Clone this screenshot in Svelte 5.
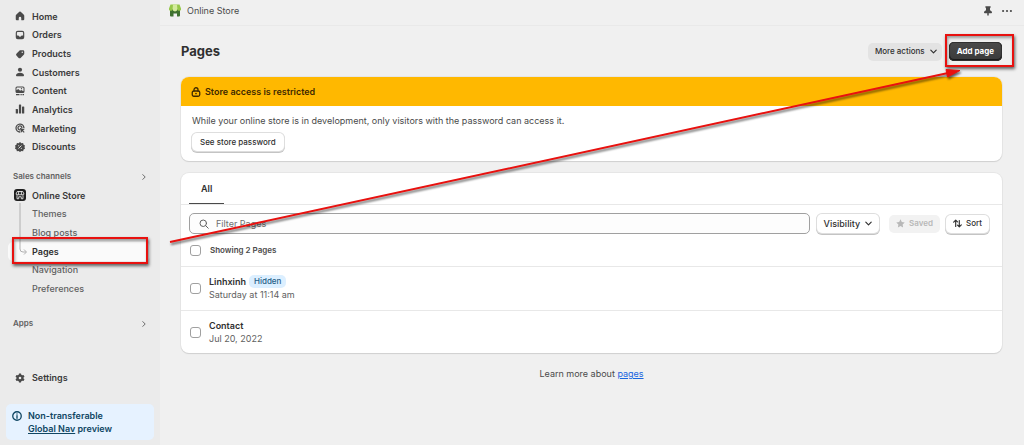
<script lang="ts">
	type NavItem = {
		label: string;
		icon: string;
	};

	type PageRow = {
		id: string;
		title: string;
		date: string;
		hidden: boolean;
	};

	const mainNav: NavItem[] = [
		{ label: 'Home', icon: 'home' },
		{ label: 'Orders', icon: 'orders' },
		{ label: 'Products', icon: 'products' },
		{ label: 'Customers', icon: 'customers' },
		{ label: 'Content', icon: 'content' },
		{ label: 'Analytics', icon: 'analytics' },
		{ label: 'Marketing', icon: 'marketing' },
		{ label: 'Discounts', icon: 'discounts' }
	];

	const storeNav = ['Themes', 'Blog posts', 'Pages', 'Navigation', 'Preferences'];
	const current = 'Pages';

	const pages: PageRow[] = [
		{ id: 'linhxinh', title: 'Linhxinh', date: 'Saturday at 11:14 am', hidden: true },
		{ id: 'contact', title: 'Contact', date: 'Jul 20, 2022', hidden: false }
	];

	let filter = $state('');
	let selected = $state<string[]>([]);

	const allSelected = $derived(selected.length === pages.length);

	function toggleAll() {
		selected = allSelected ? [] : pages.map((page) => page.id);
	}
</script>

{#snippet icon(name: string)}
	<svg class="icon" viewBox="0 0 20 20" aria-hidden="true">
		{#if name === 'home'}
			<path d="M8.600 1.700a2 2 0 0 1 2.800 0l6.300 6c.5.5.8 1.100.8 1.800V16.500a2 2 0 0 1-2 2h-3a1 1 0 0 1-1-1v-3.500a2.500 2.500 0 0 0-5 0V17.500a1 1 0 0 1-1 1H3.500a2 2 0 0 1-2-2V9.500c0-.7.3-1.300.8-1.800z" />
		{:else if name === 'orders'}
			<path fill-rule="evenodd" d="M5.500 1.500h9a4 4 0 0 1 4 4v9a4 4 0 0 1-4 4h-9a4 4 0 0 1-4-4v-9a4 4 0 0 1 4-4zM5.500 3.800a1.700 1.700 0 0 0-1.700 1.700v5.500h2.400c.9 0 1.300.5 1.700 1.200.4.7.8 1.100 1.600 1.100h1c.8 0 1.200-.4 1.600-1.100.4-.7.8-1.200 1.700-1.200h2.400V5.500a1.700 1.700 0 0 0-1.700-1.700z" />
		{:else if name === 'products'}
			<path fill-rule="evenodd" d="M11 2.500h5A2.500 2.500 0 0 1 18.500 5v4.500c0 .8-.4 1.600-1 2.200l-5.800 5.600a3.500 3.500 0 0 1-4.900 0l-3.600-3.600a3.500 3.500 0 0 1 0-4.900L8.700 3.400c.6-.6 1.400-.9 2.300-.9zM14.500 8a1.400 1.400 0 1 0 0-2.800 1.400 1.400 0 0 0 0 2.800z" />
		{:else if name === 'customers'}
			<circle cx="10" cy="5.500" r="4.200" />
			<path d="M2 17c0-3.500 3.600-5.500 8-5.500s8 2 8 5.500c0 1-.5 1.500-1.500 1.500h-13c-1 0-1.500-.5-1.500-1.500z" />
		{:else if name === 'content'}
			<path fill-rule="evenodd" d="M4 1h12a3 3 0 0 1 3 3v7a3 3 0 0 1-3 3H4a3 3 0 0 1-3-3V4a3 3 0 0 1 3-3zM3 8.500l3.500-2.300 3.700 3.300 2.300-1.600 4.500 2.500V4.500A1.500 1.500 0 0 0 15.500 3h-11A1.500 1.500 0 0 0 3 4.500zM13 4a1.300 1.300 0 1 1 0 2.600A1.300 1.300 0 0 1 13 4z" />
			<path d="M2 16h7v2.500H2zM11 16h2.500v2.500H11zM15 16h3v2.500h-3z" />
		{:else if name === 'analytics'}
			<rect x="1.500" y="10" width="4.500" height="9" rx="1.200" />
			<rect x="7.800" y="1" width="4.500" height="18" rx="1.200" />
			<rect x="14" y="5" width="4.500" height="14" rx="1.200" />
		{:else if name === 'marketing'}
			<path d="M17.800 9.500A7.900 7.900 0 1 0 9.800 18" class="line" />
			<path d="M13.800 9A4 4 0 1 0 9 13.800" class="line" />
			<path d="M9.300 9.300l10.200 3.600-3.500 1.900 3.300 3.300-1.600 1.600-3.300-3.300-1.700 3.300z" />
		{:else if name === 'discounts'}
			<path d="M10 .2l2.800 2.100 3.400-.3 1 3.300 2.800 1.800-1 3.100 1 3.200-2.800 1.800-1 3.200-3.400-.2L10 20l-2.800-1.800-3.400.2-1-3.200L0 13.400l1-3.200-1-3.100 2.800-1.800 1-3.300 3.400.3z" />
			<path d="M7 13l6-6" class="cut" />
			<circle cx="7.300" cy="7.500" r="1.200" class="hole" />
			<circle cx="12.700" cy="12.500" r="1.200" class="hole" />
		{:else if name === 'settings'}
			<path fill-rule="evenodd" d="M8 1h4l.6 2.700 1.800 1 2.600-.8 2 3.500L17 9.200v1.600l2 1.800-2 3.500-2.600-.8-1.800 1L12 19H8l-.6-2.700-1.800-1-2.600.8-2-3.500 2-1.800V9.200L1 7.400l2-3.500 2.600.8 1.800-1zM10 12.600a2.600 2.600 0 1 0 0-5.200 2.600 2.600 0 0 0 0 5.200z" />
		{:else if name === 'chevron-right'}
			<path d="M7 4l6 6-6 6" class="thin" />
		{:else if name === 'chevron-down'}
			<path d="M4 7l6 6 6-6" class="line" />
		{:else if name === 'lock'}
			<path d="M6 8V5.500a4 4 0 0 1 8 0V8" class="line" />
			<rect x="2.500" y="8" width="15" height="10.500" rx="3" class="line" />
			<circle cx="10" cy="13" r="1.700" />
		{:else if name === 'search'}
			<circle cx="8.500" cy="8.500" r="6.500" class="thin" />
			<path d="M13.300 13.300l5.200 5.200" class="thin" />
		{:else if name === 'star'}
			<path d="M10 .8l2.900 5.900 6.500.9-4.700 4.600 1.100 6.500L10 15.600l-5.800 3.100 1.100-6.500L.6 7.600l6.500-.9z" />
		{:else if name === 'sort'}
			<path d="M6 16.500V3M1.500 7L6 2.500 10 6.500M14 3.500V17M10 13.500l4 4 4.500-4.500" class="line" />
		{:else if name === 'pin'}
			<path d="M5.500.5h9a1 1 0 0 1 1 1c0 1.300-.8 2.300-1.500 3v4c2.300 1 4 2.500 4 4.500a1.500 1.500 0 0 1-1.500 1.500h-5V18L10 20l-1.500-2v-3.500h-5A1.500 1.500 0 0 1 2 13c0-2 1.700-3.500 4-4.500v-4c-.7-.7-1.500-1.700-1.500-3a1 1 0 0 1 1-1z" />
		{:else if name === 'dots'}
			<circle cx="2.200" cy="10" r="2.200" />
			<circle cx="10" cy="10" r="2.200" />
			<circle cx="17.800" cy="10" r="2.200" />
		{:else if name === 'info'}
			<circle cx="10" cy="10" r="8.500" class="line" />
			<path d="M10 9.500v5" class="line" />
			<circle cx="10" cy="6" r="1.400" />
		{/if}
	</svg>
{/snippet}

<div class="admin">
	<aside class="sidebar">
		<nav aria-label="Main">
			<ul class="main-nav">
				{#each mainNav as item}
					<li>
						<a href="#{item.icon}">{@render icon(item.icon)}{item.label}</a>
					</li>
				{/each}
			</ul>

			<button class="section-title">Sales channels {@render icon('chevron-right')}</button>
			<ul class="store-nav">
				<li>
					<a class="store" href="#store">
						<svg class="store-icon" viewBox="0 0 24 24" aria-hidden="true">
							<rect width="24" height="24" rx="6" fill="#1f1f1f" />
							<path d="M6.500 5h11L20 10a2 2 0 0 1-2 1.500H6A2 2 0 0 1 4 10zM6 12.500v7h3.500V15.500h5v4h3.500v-7M9.500 5L9 11M14.500 5l.5 6" fill="none" stroke="#fff" stroke-width="1.600" />
						</svg>
						Online Store
					</a>
				</li>
				{#each storeNav as item}
					<li class:current={item === current}>
						<a class="sub" href="#{item}" aria-current={item === current ? 'page' : undefined}>{item}</a>
						{#if item === current}
							<svg class="branch" viewBox="0 0 8 52" aria-hidden="true">
								<path d="M1 0v46q0 3 3 3h3M5 46.500L7.500 49 5 51.500" />
							</svg>
							<span class="mark mark-nav"></span>
						{/if}
					</li>
				{/each}
			</ul>

			<button class="section-title apps">Apps {@render icon('chevron-right')}</button>
			<a class="settings" href="#settings">{@render icon('settings')}Settings</a>
		</nav>

		<div class="notice">
			{@render icon('info')}
			<p>Non-transferable<br /><a href="#nav">Global Nav</a> preview</p>
		</div>
	</aside>

	<main>
		<header class="topbar">
			<svg class="logo" viewBox="0 0 12 13" aria-hidden="true">
				<path d="M1 5h10v6.500a1 1 0 0 1-1 1H8V9.500H4.500v3H2a1 1 0 0 1-1-1z" fill="#3f7130" />
				<path d="M1.500.5h9L12 4.500a1.900 1.900 0 0 1-3.800.8H3.800A1.900 1.900 0 0 1 0 4.500z" fill="#95c749" />
				<path d="M4 .5h4l.4 4.500a2.400 2.400 0 0 1-4.800 0z" fill="#d3eb9c" />
			</svg>
			<span>Online Store</span>
			<button class="pin" aria-label="Pin">{@render icon('pin')}</button>
			<button aria-label="More">{@render icon('dots')}</button>
		</header>

		<div class="content">
			<div class="heading">
				<h1>Pages</h1>
				<button class="more">More actions {@render icon('chevron-down')}</button>
				<div class="marked">
					<button class="primary">Add page</button>
					<span class="mark mark-add"></span>
				</div>
			</div>

			<section class="card">
				<h2 class="warning">{@render icon('lock')}Store access is restricted</h2>
				<div class="access">
					<p>While your online store is in development, only visitors with the password can access it.</p>
					<button class="outline">See store password</button>
				</div>
			</section>

			<section class="card">
				<div class="tabs">
					<button class="tab">All</button>
				</div>
				<div class="filters">
					<label class="search">
						{@render icon('search')}
						<input type="text" placeholder="Filter Pages" aria-label="Filter Pages" bind:value={filter} />
					</label>
					<button class="outline visibility">Visibility {@render icon('chevron-down')}</button>
					<button class="saved" disabled>{@render icon('star')}Saved</button>
					<button class="outline sort">{@render icon('sort')}Sort</button>
				</div>
				<label class="select-all">
					<input type="checkbox" checked={allSelected} onchange={toggleAll} />
					Showing 2 Pages
				</label>
				<ul class="rows">
					{#each pages as page}
						<li>
							<input type="checkbox" id={page.id} value={page.id} bind:group={selected} />
							<label for={page.id}>
								<span class="title">
									{page.title}
									{#if page.hidden}<span class="badge">Hidden</span>{/if}
								</span>
								<span class="date">{page.date}</span>
							</label>
						</li>
					{/each}
				</ul>
			</section>

			<p class="learn">Learn more about <a href="#pages">pages</a></p>
		</div>
	</main>

	<svg class="arrow" viewBox="0 0 1024 445" preserveAspectRatio="none" aria-hidden="true">
		<path d="M170 242L948 73" stroke="#e8110f" stroke-width="2" />
		<path d="M960 70.500L947.500 77 946 69.500z" fill="#e8110f" stroke="#e8110f" />
	</svg>
</div>

<style>
	:global(body) {
		background: #f0f0f0;
	}

	.admin {
		position: relative;
		display: flex;
		min-height: 100vh;
		background: #f0f0f0;
		color: #303030;
		font-family: Inter, 'Liberation Sans', sans-serif;
		font-size: 9px;
		line-height: 13px;
	}

	ul,
	p,
	h1,
	h2 {
		margin: 0;
		padding: 0;
		list-style: none;
	}

	button,
	input {
		margin: 0;
		padding: 0;
		border: 0;
		background: none;
		color: inherit;
		font: inherit;
	}

	.icon {
		flex: none;
		width: 10px;
		height: 10px;
		fill: currentColor;
	}

	.icon .line,
	.icon .thin {
		fill: none;
		stroke: currentColor;
		stroke-width: 2.6;
		stroke-linecap: round;
		stroke-linejoin: round;
	}

	.icon .thin {
		stroke-width: 2;
	}

	.icon .cut {
		stroke: #ebebeb;
		stroke-width: 1.8;
	}

	.icon .hole {
		fill: #ebebeb;
	}

	/* sidebar */
	.sidebar {
		flex: none;
		display: flex;
		flex-direction: column;
		box-sizing: border-box;
		width: 160px;
		padding: 7px 6px 5px;
		background: #ebebeb;
		color: #3a3a3a;
		font-weight: 600;
	}

	.main-nav,
	.store-nav {
		display: grid;
		grid-auto-rows: 1fr;
	}

	.main-nav {
		height: 149px;
	}

	.store-nav {
		height: 112px;
	}

	.sidebar li {
		position: relative;
		display: flex;
		align-items: center;
		border-radius: 5px;
	}

	.sidebar nav a {
		display: flex;
		align-items: center;
		gap: 7px;
		padding-left: 9px;
		color: inherit;
		text-decoration: none;
	}

	.sidebar nav .icon {
		color: #4a4a4a;
	}

	.sidebar nav .store {
		gap: 6px;
		padding-left: 8px;
	}

	.store-icon {
		width: 12px;
		height: 12px;
	}

	.sidebar nav .sub {
		padding-left: 26px;
		color: #616161;
		font-weight: 500;
	}

	.sidebar li.current {
		margin: 0 4px 0 2px;
		background: #fafafa;
	}

	.sidebar .current .sub {
		padding-left: 24px;
		color: #303030;
		font-weight: 600;
	}

	.branch {
		position: absolute;
		bottom: 6px;
		left: 11px;
		width: 8px;
		height: 52px;
		fill: none;
		stroke: #b0b0b0;
	}

	.section-title {
		display: flex;
		align-items: center;
		justify-content: space-between;
		width: 100%;
		padding: 14px 6px 3px 7px;
		color: #616161;
		font-size: 8px;
	}

	.section-title .icon {
		width: 8px;
		height: 8px;
	}

	.section-title.apps {
		padding-top: 19px;
	}

	.sidebar nav .settings {
		padding-top: 38px;
	}

	.notice {
		display: flex;
		gap: 6px;
		margin-top: auto;
		padding: 5px 6px;
		border-radius: 5px;
		background: #e6f2ff;
		color: #0f4663;
	}

	.notice .icon {
		margin-top: 2px;
	}

	.notice a {
		color: inherit;
	}

	/* main */
	main {
		flex: 1;
		min-width: 0;
	}

	.topbar {
		display: flex;
		align-items: center;
		box-sizing: border-box;
		height: 26px;
		padding: 0 12px 4px 9px;
		border-bottom: 1px solid #e9e9e9;
		color: #4a4a4a;
	}

	.topbar .logo {
		width: 12px;
		height: 13px;
		margin-right: 6px;
	}

	.topbar button {
		display: flex;
	}

	.topbar .pin {
		margin: 0 9px 0 auto;
	}

	.content {
		padding: 16px 22px 16px 21px;
	}

	.heading {
		display: flex;
		align-items: center;
		gap: 7px;
		height: 19px;
		margin-bottom: 16px;
	}

	h1 {
		flex: 1;
		font-size: 13px;
		font-weight: 700;
	}

	.content button {
		display: flex;
		align-items: center;
		border-radius: 5px;
		font-size: 8px;
		font-weight: 500;
	}

	.content button .icon {
		width: 9px;
		height: 9px;
	}

	.content .more {
		gap: 4px;
		height: 18px;
		padding: 0 4px 0 7px;
		background: #e3e3e3;
	}

	.marked {
		position: relative;
	}

	.content .primary {
		height: 19px;
		padding: 0 8px;
		background: linear-gradient(#4a4a4a, #3a3a3a);
		box-shadow: inset 0 0 0 1px #303030, inset 0 -1px 0 1px #1a1a1a;
		color: #fff;
		font-weight: 700;
	}

	.mark {
		position: absolute;
		border: 2px solid #e8110f;
		box-shadow: 1px 2px 3px rgb(0 0 0 / 60%), inset 1px 2px 3px rgb(0 0 0 / 35%);
	}

	.mark-nav {
		inset: -5px 2px -3px 4px;
	}

	.mark-add {
		inset: -8px -12px -6px -4px;
	}

	.card {
		margin-bottom: 12px;
		overflow: hidden;
		border-radius: 8px;
		background: #fff;
		box-shadow: 0 1px 1px #d0d0d0, 0 0 0 1px #e6e6e6;
	}

	.warning {
		display: flex;
		align-items: center;
		gap: 4px;
		padding: 8px 10px;
		background: #ffb800;
		color: #3f2a00;
		font-size: 9px;
		font-weight: 600;
	}

	.access {
		padding: 8px 11px 10px;
		color: #4a4a4a;
	}

	.access button {
		margin-top: 6px;
	}

	.content .outline {
		height: 18px;
		padding: 0 8px;
		background: #fff;
		box-shadow: 0 0 0 1px #dedede, 0 1px 0 1px #c4c4c4;
		color: #303030;
	}

	.tabs {
		display: flex;
		padding: 0 8px;
		border-bottom: 1px solid #e8e8e8;
	}

	.content .tab {
		height: 31px;
		padding: 0 12px;
		border-bottom: 1px solid #4a4a4a;
		border-radius: 0;
		font-size: 9px;
		font-weight: 600;
	}

	.filters {
		display: flex;
		align-items: center;
		padding: 8px 13px 7px 8px;
	}

	.search {
		flex: 1;
		display: flex;
		align-items: center;
		gap: 7px;
		height: 19px;
		padding: 0 9px;
		border: 1px solid #a0a0a0;
		border-radius: 5px;
		background: #fdfdfd;
		color: #616161;
	}

	.search input {
		flex: 1;
		outline: none;
	}

	.search input::placeholder {
		color: #707070;
		opacity: 1;
	}

	.content .visibility {
		gap: 4px;
		height: 19px;
		margin: 0 10px 0 7px;
		padding: 0 6px 0 7px;
		font-size: 9px;
	}

	.content .saved {
		gap: 4px;
		height: 18px;
		margin-right: 6px;
		padding: 0 7px;
		background: #f2f2f2;
		color: #b8b8b8;
		font-weight: 600;
	}

	.content .sort {
		gap: 4px;
		padding: 0 7px;
	}

	input[type='checkbox'] {
		flex: none;
		box-sizing: border-box;
		width: 11px;
		height: 11px;
		border: 1px solid #a0a0a0;
		border-radius: 3px;
		background: #fff;
		appearance: none;
	}

	input[type='checkbox']:checked {
		background: #303030;
	}

	.select-all {
		display: flex;
		align-items: center;
		gap: 9px;
		padding: 3px 9px 9px;
		font-size: 8px;
		font-weight: 600;
		color: #4a4a4a;
	}

	.rows li {
		display: flex;
		align-items: center;
		gap: 8px;
		padding: 8px 9px 9px;
		border-top: 1px solid #e8e8e8;
	}

	.rows li:last-child {
		padding-bottom: 8px;
	}

	.rows label {
		flex: 1;
	}

	.title {
		display: flex;
		align-items: center;
		gap: 3px;
		font-weight: 600;
	}

	.badge {
		padding: 0 5px;
		border-radius: 5px;
		background: #dcefff;
		color: #1f6088;
		font-size: 8px;
		font-weight: 500;
	}

	.date {
		display: block;
		color: #616161;
	}

	.learn {
		margin-top: 14px;
		color: #4a4a4a;
		text-align: center;
	}

	.learn a {
		color: #1a66e0;
	}

	/* annotation arrow over the whole page */
	.arrow {
		position: absolute;
		top: 0;
		left: 0;
		width: 100%;
		height: 445px;
		filter: drop-shadow(1px 2px 1px rgb(0 0 0 / 60%));
		pointer-events: none;
	}
</style>
